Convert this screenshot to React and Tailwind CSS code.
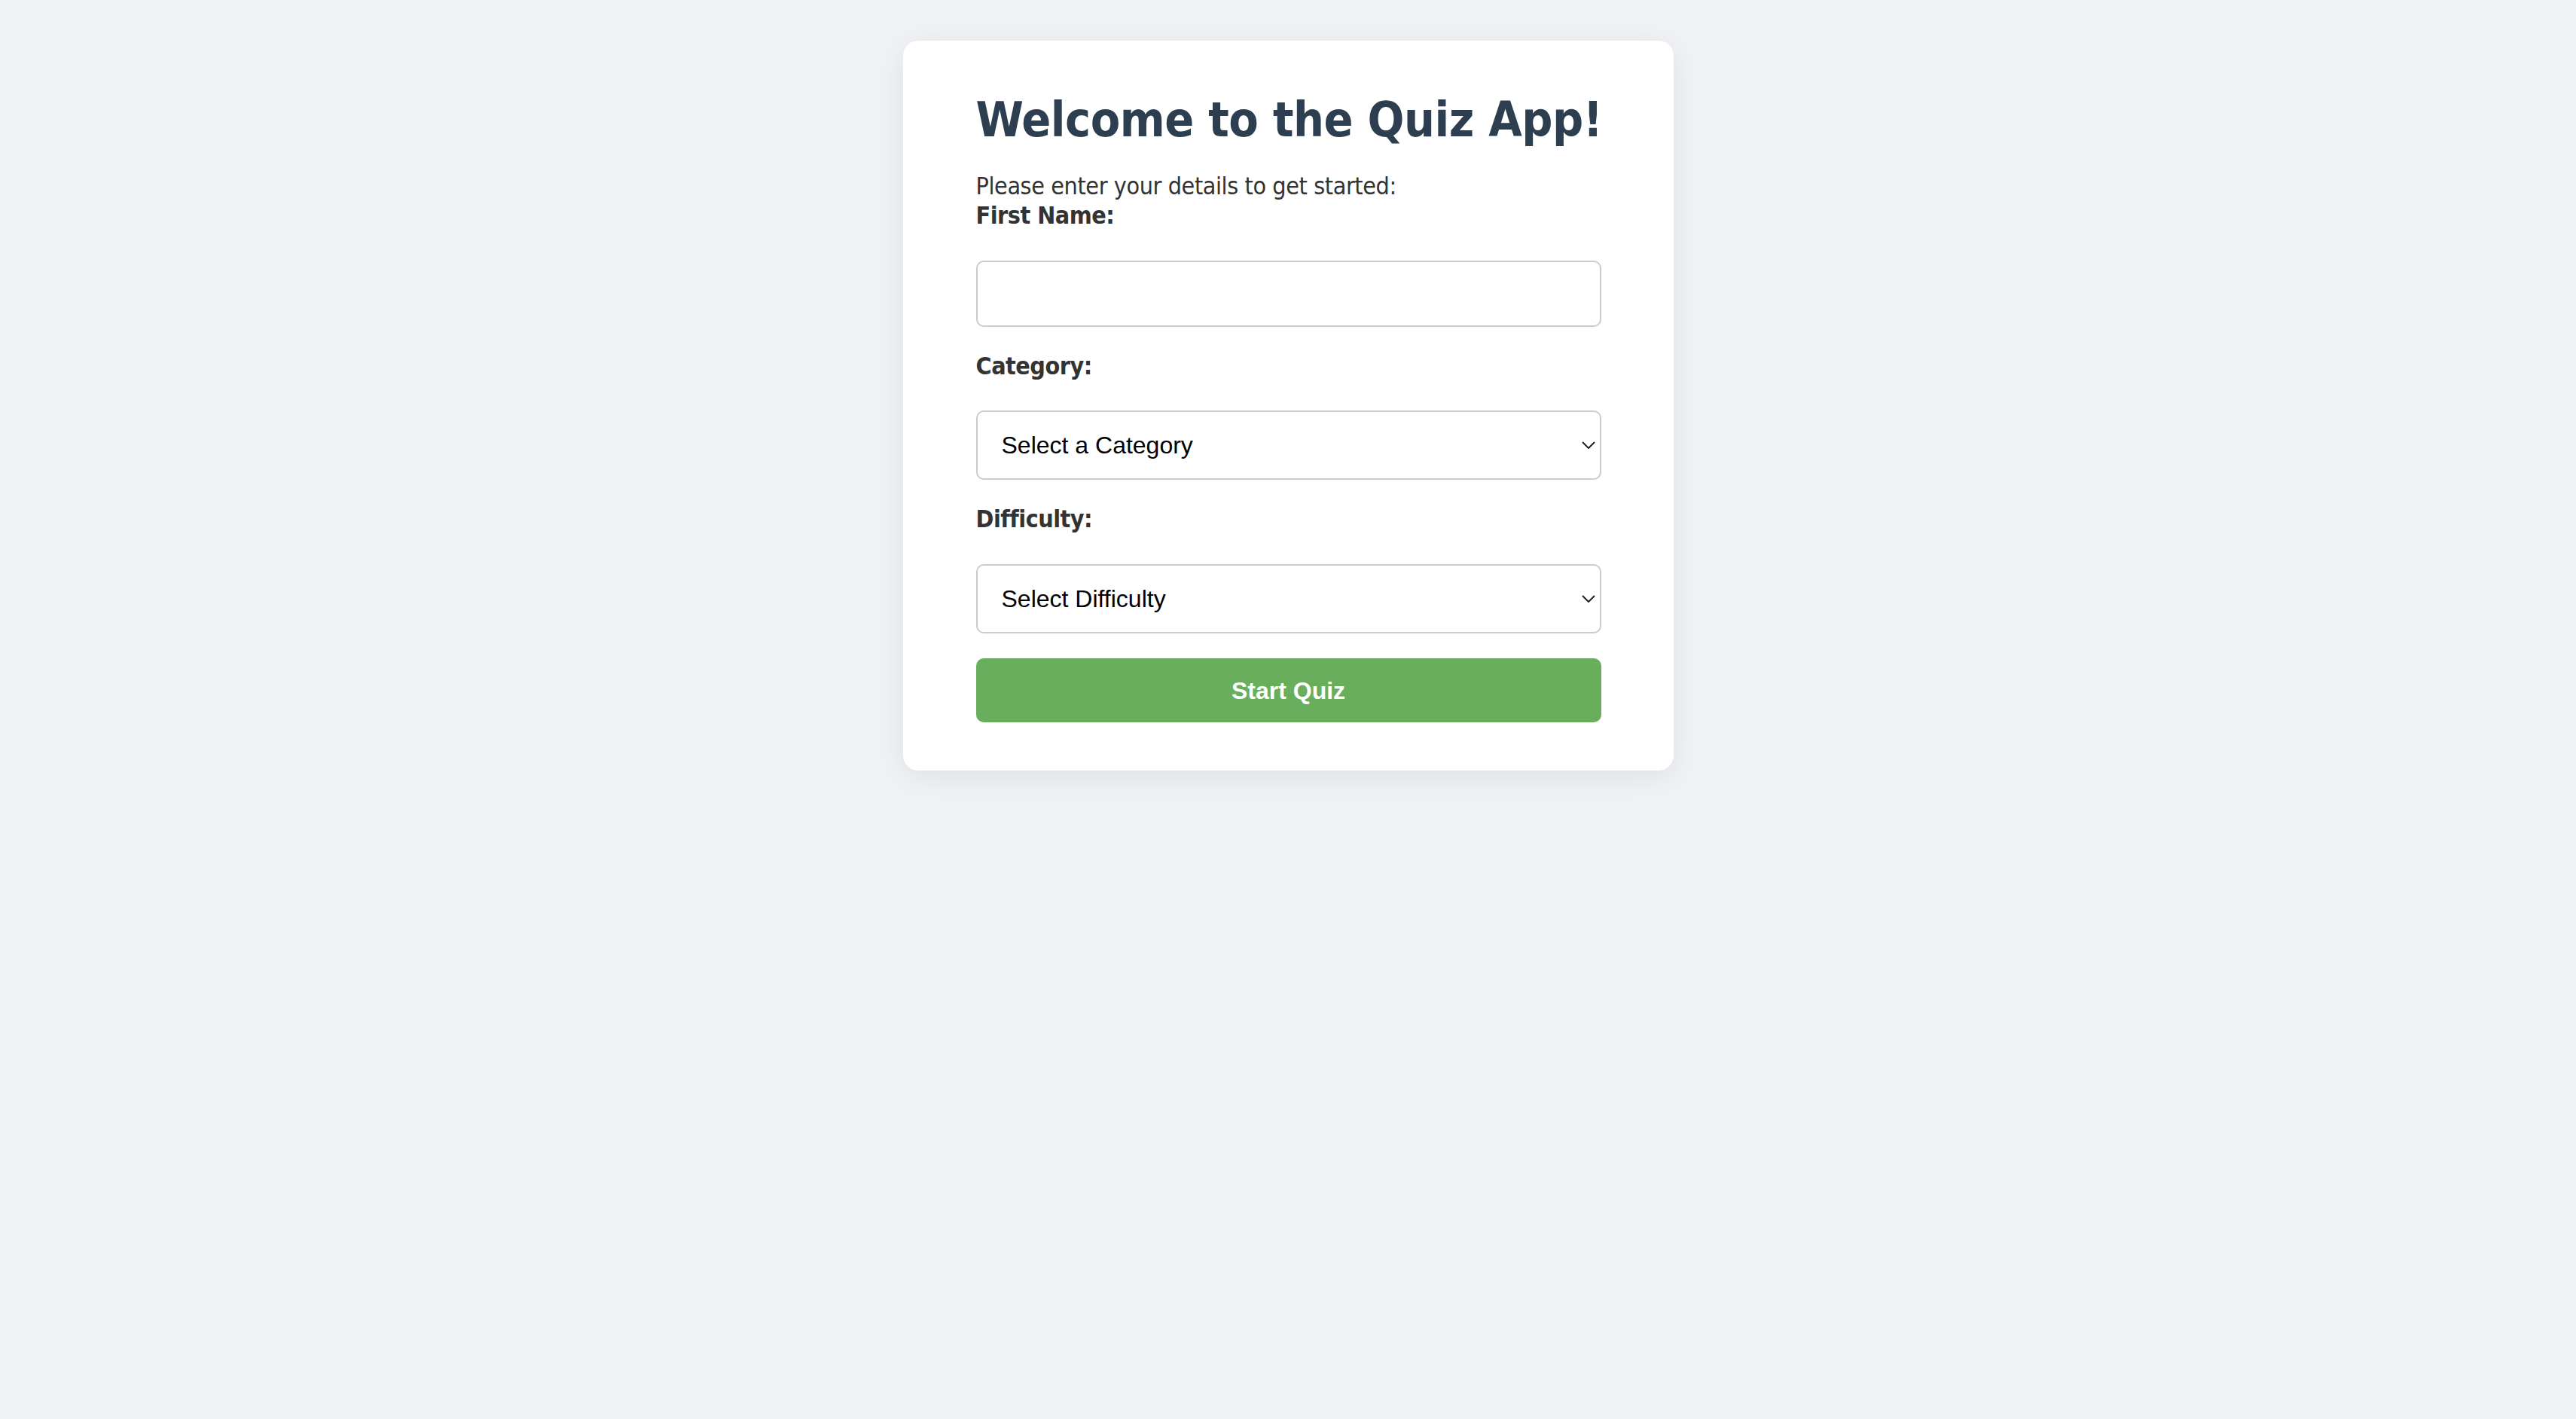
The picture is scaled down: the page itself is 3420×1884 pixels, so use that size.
import { useState } from "react";

const SANS = "font-['DejaVu_Sans_Condensed','DejaVu_Sans',Verdana,sans-serif]";

function Chevron() {
  return (
    <svg
      className="pointer-events-none absolute right-[8px] top-1/2 -translate-y-1/2"
      width="18"
      height="10"
      viewBox="0 0 18 10"
      fill="none"
      stroke="#222"
      strokeWidth="2"
    >
      <path d="M1 1l8 8 8-8" />
    </svg>
  );
}

function Picker({ value, onChange, placeholder, options, height }) {
  return (
    <div className="relative">
      <select
        value={value}
        onChange={(e) => onChange(e.target.value)}
        className={`block w-full appearance-none rounded-[10px] border-2 border-[#ccc] bg-white pl-[32px] pr-[40px] font-['Liberation_Sans',Arial,sans-serif] text-[32px] text-black outline-none ${height}`}
      >
        <option value="">{placeholder}</option>
        {options.map((o) => (
          <option key={o} value={o}>
            {o}
          </option>
        ))}
      </select>
      <Chevron />
    </div>
  );
}

export default function App() {
  const [name, setName] = useState("");
  const [category, setCategory] = useState("");
  const [difficulty, setDifficulty] = useState("");

  return (
    <div className={`min-h-screen bg-[#f0f2f5] pt-[54px] ${SANS}`}>
      <div className="mx-auto w-[1023px] rounded-[20px] bg-white pb-[64px] pl-[97px] pr-[96px] pt-[67px] shadow-[0_8px_40px_rgba(0,0,0,0.08)]">
        <h1 className="whitespace-nowrap text-[64px] font-bold leading-[77px] tracking-[-0.5px] text-[#2c3e50]">
          Welcome to the Quiz App!
        </h1>
        <p className="mt-[30px] text-[32px] leading-[39px] tracking-[-0.4px] text-[#333]">
          Please enter your details to get started:
        </p>
        <form onSubmit={(e) => e.preventDefault()}>
          <label className="block text-[32px] font-bold leading-[39px] tracking-[-0.5px] text-[#333]">
            First Name:
          </label>
          <input
            type="text"
            value={name}
            onChange={(e) => setName(e.target.value)}
            className="mt-[40px] block h-[88px] w-full rounded-[10px] border-2 border-[#ccc] px-[32px] text-[32px] outline-none"
          />

          <label className="mt-[33px] block text-[32px] font-bold leading-[39px] tracking-[-0.5px] text-[#333]">
            Category:
          </label>
          <div className="mt-[39px]">
            <Picker
              value={category}
              onChange={setCategory}
              placeholder="Select a Category"
              options={["General Knowledge", "Science", "History", "Sports"]}
              height="h-[92px]"
            />
          </div>

          <label className="mt-[33px] block text-[32px] font-bold leading-[39px] tracking-[-0.5px] text-[#333]">
            Difficulty:
          </label>
          <div className="mt-[40px]">
            <Picker
              value={difficulty}
              onChange={setDifficulty}
              placeholder="Select Difficulty"
              options={["Easy", "Medium", "Hard"]}
              height="h-[92px]"
            />
          </div>

          <button
            type="submit"
            className="mt-[33px] block h-[85px] w-full rounded-[10px] bg-[#69ae5d] font-['Liberation_Sans',Arial,sans-serif] text-[32px] font-bold text-white"
          >
            Start Quiz
          </button>
        </form>
      </div>
    </div>
  );
}
